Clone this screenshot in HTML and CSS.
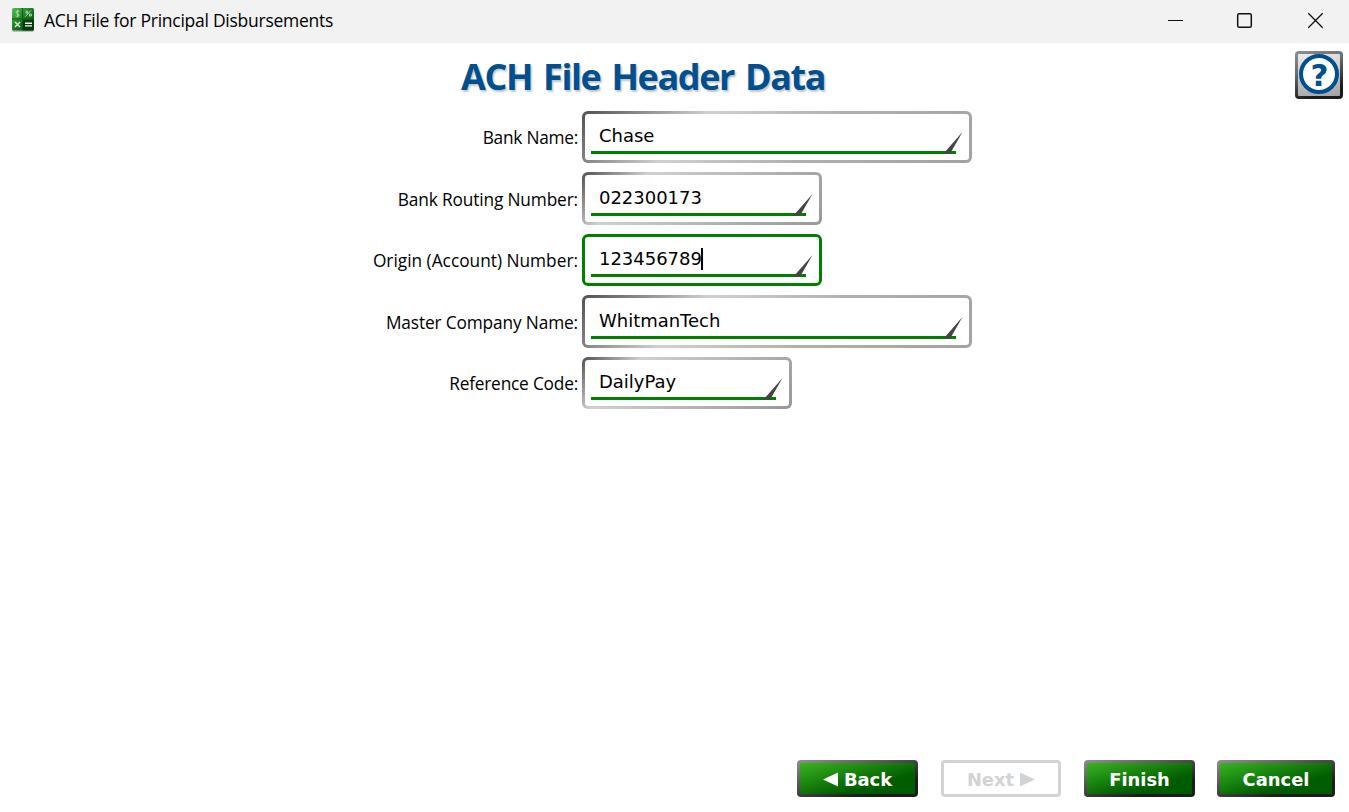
FILE: index.html
```html
<!DOCTYPE html>
<html lang="en">
<head>
<meta charset="utf-8">
<title>ACH File for Principal Disbursements</title>
<link rel="stylesheet" href="styles.css">
</head>
<body>
<div class="window">
  <header class="titlebar">
    <svg class="app-icon" width="24" height="26" viewBox="0 0 24 26">
      <defs>
        <linearGradient id="tile" x1="0" y1="0" x2="1" y2="1"><stop offset="0" stop-color="#4fc04f"/><stop offset=".5" stop-color="#1c7a24"/><stop offset="1" stop-color="#013c08"/></linearGradient>
      </defs>
      <rect x="1" y="2" width="22" height="23" rx="2" fill="#999" opacity=".6"/>
      <rect x="1" y="1" width="22" height="22.5" rx="1.5" fill="url(#tile)"/>
      <path d="M12 12.5h11v9.5a1.5 1.5 0 0 1-1.5 1.5H12z" fill="#023c0b"/>
      <path d="M11.5 1v22.5M1 12h22" stroke="#0f5a18" stroke-width="1"/>
      <path d="M8.5 4.500C7 3.500 5 4 5 5.400C5 7.200 8 6.500 8 8.200C8 9.500 6 9.700 4.500 8.800M6.600 2.700v7.600M20 3.500l-5.500 6M15 4.200h1.800v2H15zM18.500 7h1.800v2h-1.800z" fill="none" stroke="#a9dca9" stroke-width="1"/>
      <path d="M4 15l5 5M9 15l-5 5" stroke="#d4ead4" stroke-width="1.500"/>
      <path d="M14 16.300h7M14 18.900h7" stroke="#fff" stroke-width="1.400"/>
    </svg>
    <span class="caption">ACH File for Principal Disbursements</span>
    <svg class="controls" width="160" height="20" viewBox="0 0 160 20" fill="none" stroke="#111" stroke-width="1.300">
      <path d="M0 10.500h15" stroke-width="1"/>
      <rect x="69.700" y="3.700" width="13.600" height="13.600" rx="1.600" stroke-width="1.500"/>
      <path d="M140.300 3.300l14.400 14.400M154.700 3.300l-14.400 14.400"/>
    </svg>
  </header>
  <main class="content">
    <h1 class="heading">ACH File Header Data</h1>
    <button class="help" aria-label="Help"><span class="help-ring">?</span></button>
    <form class="form">
      <label class="label" for="f1">Bank Name:</label>
      <div class="field wide" id="f1"><div class="entry">Chase</div><svg class="tick" width="21" height="22" viewBox="0 0 21 22"><path d="M0 21.800Q2.500 20.800 4 18.700L20.500 0 9 20Q8 21.800 6.500 21.800z"/></svg></div>
      <label class="label routing" for="f2">Bank Routing Number:</label>
      <div class="field medium" id="f2"><div class="entry">022300173</div><svg class="tick" width="21" height="22" viewBox="0 0 21 22"><path d="M0 21.800Q2.500 20.800 4 18.700L20.500 0 9 20Q8 21.800 6.500 21.800z"/></svg></div>
      <label class="label origin" for="f3">Origin (Account) Number:</label>
      <div class="field medium focused" id="f3"><div class="entry">123456789<span class="caret"></span></div><svg class="tick" width="21" height="22" viewBox="0 0 21 22"><path d="M0 21.800Q2.500 20.800 4 18.700L20.500 0 9 20Q8 21.800 6.500 21.800z"/></svg></div>
      <label class="label company" for="f4">Master Company Name:</label>
      <div class="field wide" id="f4"><div class="entry">WhitmanTech</div><svg class="tick" width="21" height="22" viewBox="0 0 21 22"><path d="M0 21.800Q2.500 20.800 4 18.700L20.500 0 9 20Q8 21.800 6.500 21.800z"/></svg></div>
      <label class="label reference" for="f5">Reference Code:</label>
      <div class="field small" id="f5"><div class="entry">DailyPay</div><svg class="tick" width="21" height="22" viewBox="0 0 21 22"><path d="M0 21.800Q2.500 20.800 4 18.700L20.500 0 9 20Q8 21.800 6.500 21.800z"/></svg></div>
    </form>
  </main>
  <footer class="actions">
    <button class="btn back"><svg width="15" height="15" viewBox="0 0 15 15"><path d="M0 7.500L15 .5v14z" fill="currentColor"/></svg>Back</button>
    <button class="btn next" disabled>Next<svg width="15" height="15" viewBox="0 0 15 15"><path d="M15 7.500L0 .5v14z" fill="currentColor"/></svg></button>
    <button class="btn finish">Finish</button>
    <button class="btn cancel">Cancel</button>
  </footer>
</div>
</body>
</html>
```
FILE: styles.css
```css
* { box-sizing: border-box; }
body { margin: 0; background: #fff; color: #000; font-family: "Open Sans", "Noto Sans", sans-serif; }
.window { display: flex; flex-direction: column; height: 812px; overflow: hidden; }
.titlebar { display: flex; align-items: center; height: 43px; flex: none; padding: 0 21px 3px 11px; background: #f2f2f2; }
.caption { margin-left: 9px; font-size: 17.5px; letter-spacing: -0.26px; line-height: 24px; white-space: nowrap; }
.controls { margin-left: auto; }
.content { position: relative; flex: 1; padding-top: 9px; }
.heading { margin: 0 0 9px 461px; height: 50px; line-height: 50px; font-size: 36px; font-weight: 700; letter-spacing: -1.4px; word-spacing: 3px; color: #00508f; text-shadow: 1.5px 2px 2px #c4c4c4; white-space: nowrap; }
.help { position: absolute; top: 8px; right: 6px; width: 48px; height: 48px; padding: 0; border: 3px solid transparent; border-radius: 4px; background: linear-gradient(170deg, #ececec, #a2a2a4) padding-box, linear-gradient(160deg, #909090, #6c6c6c 35%, #1b1b1b 80%) border-box; }
.help-ring { display: flex; align-items: center; justify-content: center; width: 40px; height: 40px; margin: 0 0 2px 1px; padding: 2px 0 0 1px; border: 4px solid #00508f; border-radius: 50%; background: #fff; color: #00508f; font: 700 31px/30px "DejaVu Sans", sans-serif; }
.form { display: grid; grid-template-columns: 578px auto; column-gap: 4px; grid-template-rows: 52px 53px 52px 53px 52px; row-gap: 9px; justify-content: start; }
.label { justify-self: end; align-self: center; line-height: 24px; padding-top: 2px; font-size: 17.3px; letter-spacing: -0.25px; white-space: nowrap; }
.routing { letter-spacing: -0.14px; }
.origin { letter-spacing: 0; }
.company { letter-spacing: -0.14px; }
.reference { letter-spacing: -0.2px; }
.field { position: relative; padding: 6px 13px 6px 6px; border: 3px solid transparent; border-radius: 6px; background: linear-gradient(#fff, #fff) padding-box, linear-gradient(135deg, #505050, #d0d0d0 23%, #989898) border-box; }
.field.wide { width: 390px; background: linear-gradient(#fff, #fff) padding-box, linear-gradient(135deg, #505050, #d0d0d0 29%, #b0b0b0 60%, #a2a2a2) border-box; }
.field.medium { width: 240px; }
.field.small { width: 210px; }
.field.focused { border-color: #008000; background: #fff; }
.entry { display: flex; align-items: center; height: 100%; padding: 1px 0 0 8px; border-bottom: 3px solid #008000; font: 18px/24px "DejaVu Sans", sans-serif; letter-spacing: -0.02px; white-space: nowrap; }
.caret { width: 2px; height: 22px; margin-left: -1px; background: #000; }
.tick { position: absolute; right: 6px; bottom: 6px; fill: #444; }
.actions { display: flex; flex: none; padding: 0 14px 15px 0; justify-content: flex-end; }
.btn { display: flex; align-items: center; justify-content: center; gap: 6px; height: 37px; padding: 2px 0 0; border: 3px solid transparent; border-radius: 4px; color: #fff; background: linear-gradient(165deg, #38b420, #005c00 68%) padding-box, linear-gradient(165deg, #909090, #505050 40%, #1d1d1d 75%) border-box; font: 700 17.900px/24px "DejaVu Sans", sans-serif; white-space: nowrap; }
.back { width: 121px; margin-right: 23px; }
.next { width: 120px; margin-right: 23px; color: #d1d3d5; border-color: #d1d3d5; background: #fff; }
.finish { width: 111px; margin-right: 22px; }
.cancel { width: 118px; }
```
